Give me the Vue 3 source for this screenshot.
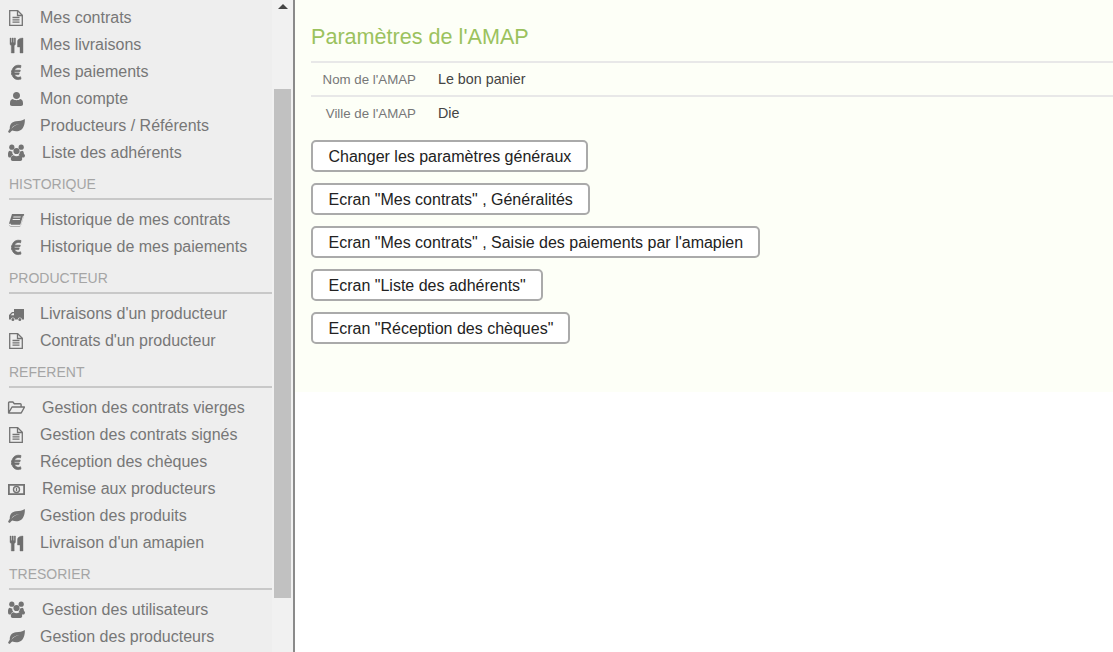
<script setup>
const sections = [
  { title: null, items: [
    ['file', 'Mes contrats'], ['cutlery', 'Mes livraisons'], ['euro', 'Mes paiements'], ['user', 'Mon compte'], ['leaf', 'Producteurs / Référents'], ['users', 'Liste des adhérents'],
  ] },
  { title: 'HISTORIQUE', items: [['book', 'Historique de mes contrats'], ['euro', 'Historique de mes paiements']] },
  { title: 'PRODUCTEUR', items: [['truck', "Livraisons d'un producteur"], ['file', "Contrats d'un producteur"]] },
  { title: 'REFERENT', items: [
    ['folder', 'Gestion des contrats vierges'], ['file', 'Gestion des contrats signés'], ['euro', 'Réception des chèques'], ['money', 'Remise aux producteurs'], ['leaf', 'Gestion des produits'], ['cutlery', "Livraison d'un amapien"],
  ] },
  { title: 'TRESORIER', items: [['users', 'Gestion des utilisateurs'], ['leaf', 'Gestion des producteurs']] },
]
const wide = new Set(['users', 'folder', 'money'])
const buttons = ['Changer les paramètres généraux', 'Ecran "Mes contrats" , Généralités', 'Ecran "Mes contrats" , Saisie des paiements par l\'amapien', 'Ecran "Liste des adhérents"', 'Ecran "Réception des chèques"']
</script>

<template>
  <div class="page">
    <aside class="side">
      <nav class="menu">
        <section v-for="(s, i) in sections" :key="i">
          <h3 v-if="s.title" class="head">{{ s.title }}</h3>
          <a v-for="it in s.items" :key="it[1]" class="item" :class="{ wide: wide.has(it[0]) }">
            <svg class="ico" viewBox="0 0 18 18">
              <g v-if="it[0] === 'file'" fill="none" stroke="#737373" stroke-width="1.3">
                <path d="M2.700 1.700h8l4.600 4.600v10H2.700z" /><path d="M10.500 1.700v4.800h4.800" /><path d="M5.500 8.500h7M5.500 10.800h7M5.500 13.100h7" />
              </g>
              <path v-else-if="it[0] === 'cutlery'" fill="#6e6e6e" stroke="#6e6e6e" stroke-width=".4" d="M3 2h1.100v4.500h.9V2h1.300v4.500h.9V2h1.300v5.800c0 .9-.6 1.500-1.300 1.800v7.400H4.300V9.600C3.500 9.300 3 8.700 3 7.800zM10.500 11V5.500c0-2 2-3.500 5.500-3.500v15h-3v-6z" />
              <path v-else-if="it[0] === 'euro'" fill="#6e6e6e" stroke="#6e6e6e" stroke-width=".7" d="M14 2.500l-.5 2.400c-.8-.3-1.600-.4-2.400-.4-1.700 0-2.900 1-3.500 2.700h5.700l-.4 1.600H7.300v1.200h4.900l-.4 1.600H7.700c.6 1.700 1.800 2.700 3.500 2.700.9 0 1.700-.2 2.400-.5l.4 2.300c-.9.300-1.900.5-3 .5-3 0-5.200-1.800-6-5H4.500v-1.600h.3V9.300H4.500V7.700h.4C5.700 4.400 7.900 2.200 11 2.200c1.100 0 2.100.1 3 .3z" />
              <path v-else-if="it[0] === 'user'" fill="#737373" d="M9.500 2c2.100 0 3.500 1.500 3.500 3.500S11.600 9 9.500 9 6 7.500 6 5.500 7.400 2 9.500 2zM5.800 9c.9.800 2.200 1.200 3.700 1.200s2.800-.4 3.700-1.200c1.800.2 2.800 1.800 2.800 4.300v1c0 1-.8 1.700-2 1.700H5c-1.200 0-2-.7-2-1.700v-1C3 10.800 4 9.200 5.800 9z" />
              <path v-else-if="it[0] === 'leaf'" fill="#737373" fill-rule="evenodd" d="M1 15c.3-1 .9-2.100 1.800-3.200C2.500 7.500 5 4.800 9 4.300c3.200-.4 6.500-.5 8.800-2.300.3 4-.8 9-3.900 11-2.600 1.600-6 1.500-8.600.4-.9.500-1.700 1.200-2.500 2.600zM4.300 11.800c1.900-2.400 4.600-3.900 8.200-4.800-3.700.3-6.600 1.900-8.200 4.800z" />
              <g v-else-if="it[0] === 'users'" fill="#737373">
                <circle cx="4.800" cy="3.200" r="2.600" /><circle cx="14.200" cy="3.200" r="2.600" /><circle cx="9.500" cy="7" r="3.100" />
                <path d="M1 10.500c0-2.300.7-3.700 2-3.700.6.500 1.400.7 2.400.6-.3 1 0 2.300.9 3.300-1.300.5-2.200 1.500-2.500 2.800H2.200C1.400 13.500 1 12.500 1 10.500zM18 10.500c0 2-.4 3-1.200 3h-2.600c-.3-1.300-1.200-2.300-2.500-2.800.9-1 1.200-2.300.9-3.300 1 .1 1.800-.1 2.400-.6 1.300 0 2 1.400 2 3.700zM6.700 11.300c.7.600 1.700.9 2.800.9s2.100-.3 2.800-.9c1.800.2 2.900 1.700 2.900 3.800 0 1.300-.8 2-1.900 2H5.700c-1.100 0-1.900-.7-1.900-2 0-2.100 1.100-3.600 2.900-3.800z" />
              </g>
              <path v-else-if="it[0] === 'book'" fill="#737373" fill-rule="evenodd" d="M5 3h11.300c.7 0 1 .5.800 1.200l-2.900 9.600c-.3.800-.9 1.200-1.700 1.200H3.800c-1.400 0-2.200-1-1.800-2.500zM3.900 12.800c-.3.600.1 1 .7 1h8.700l2.800-9.300.6.400-2.900 9.700c-.2.700-.6 1-1.300 1H4c-1.500 0-2.400-1-2-2.800zM6.500 5.400l-.3 1h7.300l.3-1zM5.800 7.900l-.3 1h7.300l.3-1z" />
              <path v-else-if="it[0] === 'truck'" fill="#737373" fill-rule="evenodd" d="M7 4h10v10.500h-2.100a2.100 2.100 0 00-4.200 0H8a2.100 2.100 0 00-4.200 0H2V10l3-3h2zM3.600 10.300h3.400V8.200H5.700zM5.900 13a1.500 1.500 0 110 3 1.500 1.500 0 010-3zm6.900 0a1.500 1.500 0 110 3 1.500 1.500 0 010-3z" />
              <path v-else-if="it[0] === 'folder'" fill="none" stroke="#737373" stroke-width="1.400" stroke-linejoin="round" d="M1.600 14V3.800c0-.5.300-.8.800-.8h3.500l1.400 1.800h6c.5 0 .8.300.8.800V8M1.600 14h12.600l3.300-6H5z" />
              <g v-else-if="it[0] === 'money'">
                <path fill="#737373" fill-rule="evenodd" d="M1 4h17v11H1zM2.800 5.800v7.400h13.400V5.800z" />
                <circle cx="9.500" cy="9.500" r="3" fill="none" stroke="#737373" stroke-width="1.400" /><path stroke="#737373" stroke-width="1.300" d="M9.500 8v3" />
              </g>
            </svg>
            <span>{{ it[1] }}</span>
          </a>
        </section>
      </nav>
      <div class="scroll">
        <span class="arrow"></span>
        <span class="thumb"></span>
      </div>
    </aside>
    <main class="main">
      <div class="panel">
        <h2 class="title">Paramètres de l'AMAP</h2>
        <div class="row"><span class="lab">Nom de l'AMAP</span><span class="val">Le bon panier</span></div>
        <div class="row"><span class="lab">Ville de l'AMAP</span><span class="val">Die</span></div>
        <div class="btns">
          <button v-for="b in buttons" :key="b" class="btn">{{ b }}</button>
        </div>
      </div>
    </main>
  </div>
</template>

<style>
html, body { margin: 0; height: 100%; overflow: hidden; background: #fff; }
</style>

<style scoped>
.page { display: flex; height: 652px; width: 1113px; overflow: hidden; font-family: "Liberation Sans", Arial, sans-serif; }
.side { width: 293px; flex: none; display: flex; background: #f1f1f1; border-right: 2px solid #8a8a8a; overflow: hidden; }
.menu { width: 272px; flex: none; background: #eee; height: 652px; overflow: hidden; padding-top: 4px; box-sizing: border-box; }
.head { margin: 0 0 0 9px; height: 34px; padding-top: 9px; box-sizing: border-box; border-bottom: 2px solid #c8c8c8; font-size: 14px; font-weight: 400; line-height: 18px; color: #a5a5a5; }
.item { display: flex; align-items: center; height: 27px; font-size: 16px; color: #777; padding-left: 7px; }
.head + .item { margin-top: 6px; }
.ico { width: 18px; height: 18px; flex: none; margin-right: 15px; }
.wide .ico { margin-right: 17px; }
.scroll { width: 21px; flex: none; position: relative; }
.arrow { position: absolute; left: 6px; top: 4px; width: 0; height: 0; border: 5px solid transparent; border-top: 0; border-bottom-color: #444; }
.thumb { position: absolute; left: 2px; top: 89px; width: 17px; height: 509px; background: #c1c1c1; }
.main { flex: 1; min-width: 0; }
.panel { background: #fdfff7; height: 392px; box-sizing: border-box; padding: 0 0 0 16px; }
.title { margin: 0; height: 61px; padding-top: 23px; box-sizing: border-box; font-size: 21.6px; font-weight: 400; line-height: 28px; color: #9bc25e; }
.row { display: flex; align-items: center; height: 34px; border-top: 2px solid #e8e8e8; box-sizing: border-box; }
.lab { width: 105px; text-align: right; color: #777; font-size: 13.3px; }
.val { margin-left: 22px; color: #444; font-size: 14.3px; }
.btns { display: flex; flex-direction: column; align-items: flex-start; gap: 11px; margin-top: 11px; }
.btn { height: 32px; padding: 1px 15px 0 15.5px; box-sizing: border-box; background: #fff; border: 2px solid #aaa; border-radius: 5px; font: 16px "Liberation Sans", Arial, sans-serif; color: #222; }
</style>
